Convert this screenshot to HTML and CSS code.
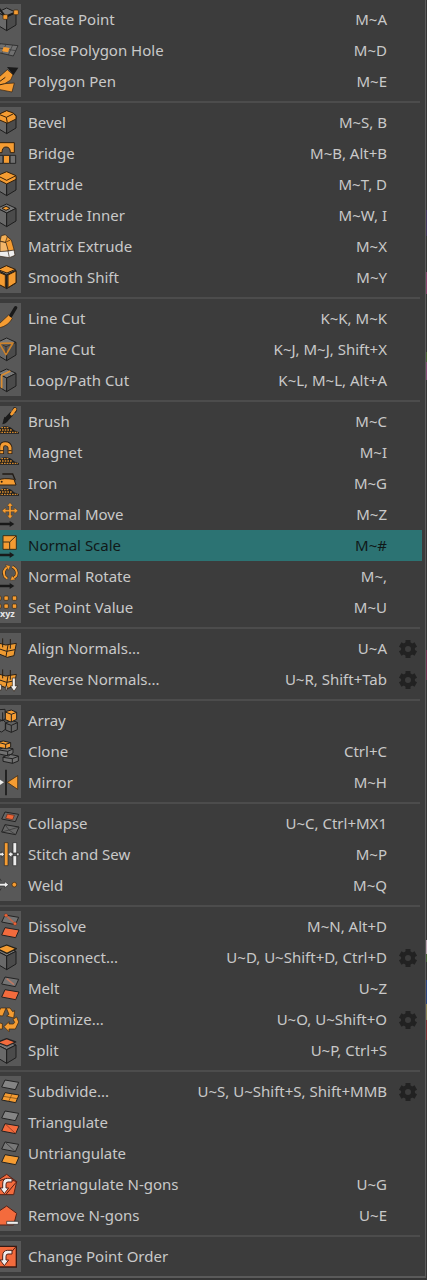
FILE: index.html
```html
<!DOCTYPE html>
<html lang="en">
<head>
<meta charset="utf-8">
<meta name="viewport" content="width=device-width, initial-scale=1">
<title>Mesh commands</title>
<link rel="stylesheet" href="styles.css">
</head>
<body>
<svg class="defs" aria-hidden="true">
  <symbol id="cube" viewBox="0 0 63 93"><g stroke="#1d1d1d" stroke-width="3" stroke-linejoin="round"><path fill="#777" d="M20 12 48 25 20 39-8 25z"/><path fill="#696969" d="M-8 25 20 39V80L-8 63z"/><path fill="#4b4b4b" d="M48 25 20 39V80L48 63z"/></g></symbol>
  <symbol id="mound" viewBox="0 0 63 93"><path fill="#1d1d1d" d="M-8 78Q2 58 18 61Q34 63 42 73L57 79V83H-8z"/><path stroke="#d58a2e" stroke-width="4" stroke-dasharray="5 3" fill="none" d="M-4 79H54M-2 72H38M4 65H27"/></symbol>
  <symbol id="axis" viewBox="0 0 63 93"><path fill="#191919" d="M-2 71H29V66L43 75 29 84V79H-2z"/></symbol>
  <symbol id="top" viewBox="0 0 63 93"><path d="M15 12 56 19 46 41 5 33z"/></symbol>
  <symbol id="low" viewBox="0 0 63 93"><path d="M15 50 57 57 47 80 5 72z"/></symbol>
  <symbol id="turn" viewBox="0 0 63 93"><path fill="#eee" stroke="#542116" stroke-width="3" d="M36 28V39H24Q18 39 18 46V57H26L13 74 0 57H8V45Q8 28 23 28z"/></symbol>
  <symbol id="plates" viewBox="0 0 63 93"><path fill="#ee9a31" stroke="#2a2016" stroke-width="3" stroke-linejoin="round" d="M-5 30 17 36 49 31 42 68 22 73-5 62z"/><path fill="none" stroke="#2a2016" stroke-width="3" d="M-4 47 20 55 45 50M24 36 18 70M8 16V43M31 18V47"/></symbol>
  <symbol id="gear" viewBox="0 0 20 20"><path fill="none" stroke="#222" stroke-width="5" d="M10 1V5M10 15V19M2.2 5.5 5.7 7.5M14.3 12.5 17.8 14.5M2.2 14.5 5.7 12.5M14.3 7.5 17.8 5.5"/><circle cx="10" cy="10" r="5" fill="none" stroke="#222" stroke-width="4"/></symbol>
</svg>

<main class="menu" aria-label="Mesh commands">
<ul class="group">
  <li class="row"><button class="item"><svg class="icon" viewBox="0 0 63 93"><use href="#cube"/><path fill="none" stroke="#1b1b1b" stroke-width="6" d="M-4 12 16 38 47 25"/><g fill="#f59c32" stroke="#38240d" stroke-width="2"><rect x="9" y="32" width="14" height="14" rx="3"/><rect x="41" y="18" width="14" height="14" rx="3"/></g></svg><span class="label">Create Point</span><kbd>M~A</kbd></button></li>
  <li class="row"><button class="item"><svg class="icon" viewBox="0 0 63 93"><path fill="#707070" stroke="#333" stroke-width="3" d="M0 26 54 32 40 63-8 52z"/><path fill="none" stroke="#333" stroke-width="2" d="M-4 39 47 47M18 28 5 55M38 30 25 60"/><path fill="#f59c32" d="M11 36 29 39 24 52 6 49z"/></svg><span class="label">Close Polygon Hole</span><kbd>M~D</kbd></button></li>
  <li class="row"><button class="item"><svg class="icon" viewBox="0 0 63 93"><path fill="#f59c32" stroke="#302010" stroke-width="2" stroke-linejoin="round" d="M22 11 39 26 32 42 14 53 43 51 36 78-5 70V35z"/><path fill="#191919" d="M21 3 55 5 40 28z"/><path stroke="#302010" stroke-width="3" d="M-3 48 16 34M-3 57 14 53"/></svg><span class="label">Polygon Pen</span><kbd>M~E</kbd></button></li>
</ul>
<hr>
<ul class="group">
  <li class="row"><button class="item"><svg class="icon" viewBox="0 0 63 93"><use href="#cube"/><g fill="#f59c32" stroke="#352009" stroke-width="3" stroke-linejoin="round"><path d="M20 11 40 18 48 28V36L22 49-8 36V24z"/><path fill="none" d="M-3 22 19 31 41 20M19 31 22 48"/></g></svg><span class="label">Bevel</span><kbd>M~S, B</kbd></button></li>
  <li class="row"><button class="item"><svg class="icon" viewBox="0 0 63 93"><path fill="#f59c32" stroke="#302010" stroke-width="3" d="M-5 14H43V44H31Q31 27 18 27Q6 27 6 44H-5z"/><g stroke="#252525" stroke-width="3"><path fill="#707070" d="M-8 52H9V76H-8zM30 52H47V76H30z"/><path fill="#f59c32" d="M10 52H29V76H10z"/></g></svg><span class="label">Bridge</span><kbd>M~B, Alt+B</kbd></button></li>
  <li class="row"><button class="item"><svg class="icon" viewBox="0 0 63 93"><use href="#cube"/><g fill="#f59c32" stroke="#352009" stroke-width="3" stroke-linejoin="round"><path d="M20 8 48 20V31L20 45-8 31V20z"/><path fill="none" d="M-8 20 20 34 48 20"/></g></svg><span class="label">Extrude</span><kbd>M~T, D</kbd></button></li>
  <li class="row"><button class="item"><svg class="icon" viewBox="0 0 63 93"><use href="#cube"/><path fill="#f59c32" stroke="#2b2114" stroke-width="3" d="M18 19 30 25 18 31 6 25z"/></svg><span class="label">Extrude Inner</span><kbd>M~W, I</kbd></button></li>
  <li class="row"><button class="item"><svg class="icon" viewBox="0 0 63 93"><g stroke="#302010" stroke-width="2" stroke-linejoin="round"><path fill="#f4b057" d="M4 14 16 11 25 20 18 35 0 30z"/><path fill="#f59c32" d="M22 17 34 27 43 59 24 60 16 34z"/><path fill="#f3b66a" d="M0 31 18 35 25 60 0 64z"/><path fill="#eee" d="M-5 62 24 60 42 57 45 73 28 80-5 75z"/><path fill="none" d="M24 60 28 79M16 34 31 27"/></g></svg><span class="label">Matrix Extrude</span><kbd>M~X</kbd></button></li>
  <li class="row"><button class="item"><svg class="icon" viewBox="0 0 63 93"><use href="#cube"/><g fill="#f59c32" stroke="#352009" stroke-width="3" stroke-linejoin="round"><path d="M19 11 46 22 21 33-6 23z"/><path d="M24 39 48 27V62L24 77z"/><path d="M-8 29 16 39V77L-8 65z"/></g></svg><span class="label">Smooth Shift</span><kbd>M~Y</kbd></button></li>
</ul>
<hr>
<ul class="group">
  <li class="row"><button class="item"><svg class="icon" viewBox="0 0 63 93"><path fill="#f59c32" stroke="#302010" stroke-width="2" d="M26 36 37 46Q25 69-4 75V64z"/><path stroke="#191919" stroke-width="10" stroke-linecap="round" d="M33 37 47 14"/></svg><span class="label">Line Cut</span><kbd>K~K, M~K</kbd></button></li>
  <li class="row"><button class="item"><svg class="icon" viewBox="0 0 63 93"><use href="#cube"/><path fill="#5a5a5a" stroke="#cc822a" stroke-width="5" stroke-linejoin="round" d="M-2 28 39 27 18 62z"/><path fill="none" stroke="#302010" stroke-width="2" d="M18 37V57M8 33 18 38 30 33"/></svg><span class="label">Plane Cut</span><kbd>K~J, M~J, Shift+X</kbd></button></li>
  <li class="row"><button class="item"><svg class="icon" viewBox="0 0 63 93"><use href="#cube"/><path fill="none" stroke="#dc8d30" stroke-width="5" stroke-linejoin="round" d="M31 18 5 31V70"/></svg><span class="label">Loop/Path Cut</span><kbd>K~L, M~L, Alt+A</kbd></button></li>
</ul>
<hr>
<ul class="group">
  <li class="row"><button class="item"><svg class="icon" viewBox="0 0 63 93"><use href="#mound"/><path stroke="#1b1b1b" stroke-width="13" stroke-linecap="round" d="M18 41 34 24M43 14 45 10"/><path stroke="#f59c32" stroke-width="9" stroke-linecap="round" d="M35 24 45 10"/><path fill="#1b1b1b" d="M13 32 24 42Q20 53 7 55z"/></svg><span class="label">Brush</span><kbd>M~C</kbd></button></li>
  <li class="row"><button class="item"><svg class="icon" viewBox="0 0 63 93"><use href="#mound"/><path fill="none" stroke="#302010" stroke-width="14" d="M5 51V31Q5 20 16 20T30 31V51"/><path fill="none" stroke="#f59c32" stroke-width="9" d="M5 49V31Q5 20 16 20T30 31V49"/><path stroke="#302010" stroke-width="3" d="M0 41H10M25 41H35"/></svg><span class="label">Magnet</span><kbd>M~I</kbd></button></li>
  <li class="row"><button class="item"><svg class="icon" viewBox="0 0 63 93"><use href="#mound"/><path fill="none" stroke="#201a14" stroke-width="4" d="M7 18H38L46 37"/><path fill="#f59c32" stroke="#302010" stroke-width="3" d="M-5 36Q10 29 42 34L48 51H-5z"/><circle cx="5" cy="41" r="3" fill="#302010"/></svg><span class="label">Iron</span><kbd>M~G</kbd></button></li>
  <li class="row"><button class="item"><svg class="icon" viewBox="0 0 63 93"><use href="#axis"/><path fill="#f59c32" stroke="#382510" stroke-width="1" d="M30 11 39 21H33V32H43V26L54 35 43 44V38H33V49H39L30 59 21 49H27V38H17V44L6 35 17 26V32H27V21H21z"/></svg><span class="label">Normal Move</span><kbd>M~Z</kbd></button></li>
  <li class="row selected"><button class="item"><svg class="icon" viewBox="0 0 63 93"><use href="#axis"/><path fill="#f59c32" stroke="#38301b" stroke-width="3" d="M9 17H49V58H9z"/><path fill="none" stroke="#38301b" stroke-width="3" d="M9 36H29V58M29 36 48 18"/></svg><span class="label">Normal Scale</span><kbd>M~#</kbd></button></li>
  <li class="row"><button class="item"><svg class="icon" viewBox="0 0 63 93"><use href="#axis"/><g fill="none"><path stroke="#302010" stroke-width="9" d="M24 17Q6 28 14 46L22 53M37 17Q55 27 49 44L38 54"/><path stroke="#f59c32" stroke-width="6" d="M24 17Q6 28 14 46L22 53M37 17Q55 27 49 44L38 54"/></g><path fill="#f59c32" stroke="#302010" stroke-width="1" d="M17 11 31 15 25 28zM31 58 36 44 46 56z"/></svg><span class="label">Normal Rotate</span><kbd>M~,</kbd></button></li>
  <li class="row"><button class="item"><svg class="icon" viewBox="0 0 63 93"><g fill="#f59c32" stroke="#30220f" stroke-width="2"><rect x="-9" y="12" width="12" height="13" rx="3"/><rect x="12" y="12" width="13" height="13" rx="3"/><rect x="37" y="12" width="13" height="13" rx="3"/><rect x="-9" y="36" width="12" height="13" rx="3"/><rect x="12" y="36" width="13" height="13" rx="3"/><rect x="37" y="36" width="13" height="13" rx="3"/></g><text class="axes" x="0" y="74">xyz</text></svg><span class="label">Set Point Value</span><kbd>M~U</kbd></button></li>
</ul>
<hr>
<ul class="group">
  <li class="row"><button class="item"><svg class="icon" viewBox="0 0 63 93"><use href="#plates"/></svg><span class="label">Align Normals...</span><kbd>U~A</kbd></button><button class="options" aria-label="Align Normals options"><svg viewBox="0 0 20 20"><use href="#gear"/></svg></button></li>
  <li class="row"><button class="item"><svg class="icon" viewBox="0 0 63 93"><use href="#plates"/><path fill="#eee" stroke="#302010" stroke-width="2" d="M37 42H46V66H53L42 82 31 66H37zM-3 62H4V78H-3zM17 66H21V78H17z"/></svg><span class="label">Reverse Normals...</span><kbd>U~R, Shift+Tab</kbd></button><button class="options" aria-label="Reverse Normals options"><svg viewBox="0 0 20 20"><use href="#gear"/></svg></button></li>
</ul>
<hr>
<ul class="group">
  <li class="row"><button class="item"><svg class="icon" viewBox="0 0 63 93"><g stroke="#202020" stroke-width="3" stroke-linejoin="round"><path fill="#626262" d="M-4 14 15 13 17 40 8 47-4 43zM-4 50 10 45 16 52V73L5 81-4 78zM17 54 35 46 52 52V74L34 82 17 75z"/><path fill="#f59c32" d="M16 20 34 15 50 22V43L33 51 16 44z"/><path fill="none" d="M16 21 34 28 50 22M34 28V51M17 55 34 61 52 53M34 61V82M8 22V46"/></g></svg><span class="label">Array</span></button></li>
  <li class="row"><button class="item"><svg class="icon" viewBox="0 0 63 93"><g stroke="#202020" stroke-width="3" stroke-linejoin="round"><path fill="#707070" d="M-2 40 13 34 39 38V51L25 60-2 54zM9 63 29 55 55 60V75L38 82 9 76z"/><path fill="#f59c32" d="M-5 18 10 15 32 20V33L19 38-5 34z"/><path fill="none" d="M-5 19 17 25 32 20M17 25V38M-2 42 23 46 39 39M23 46V58M9 64 37 68 55 61M37 68V82"/></g></svg><span class="label">Clone</span><kbd>Ctrl+C</kbd></button></li>
  <li class="row"><button class="item"><svg class="icon" viewBox="0 0 63 93"><path stroke="#191919" stroke-width="5" d="M18 8V85"/><path fill="#eee" stroke="#222" d="M-8 32 13 46-8 60z"/><path fill="#f59c32" stroke="#352009" stroke-width="2" d="M22 46 53 26V67z"/></svg><span class="label">Mirror</span><kbd>M~H</kbd></button></li>
</ul>
<hr>
<ul class="group">
  <li class="row"><button class="item"><svg class="icon" viewBox="0 0 63 93"><g fill="#666" stroke="#222" stroke-width="3"><use href="#top"/><use href="#low"/></g><path fill="#ee6537" stroke="#52271c" stroke-width="2" d="M22 18 43 22 38 35 17 31z"/><path fill="none" stroke="#303030" stroke-width="2" d="M15 50 27 66 57 57M5 72 27 66 47 80"/></svg><span class="label">Collapse</span><kbd>U~C, Ctrl+MX1</kbd></button></li>
  <li class="row"><button class="item"><svg class="icon" viewBox="0 0 63 93"><g stroke="#252525" stroke-width="2"><path fill="#f59c32" d="M13 11H24V80H13z"/><path fill="#eee" d="M39 11H50V80H39zM-5 42H5V37L13 46 5 55V50H-5zM57 42H35V36L24 46 35 56V50H57z"/></g></svg><span class="label">Stitch and Sew</span><kbd>M~P</kbd></button></li>
  <li class="row"><button class="item"><svg class="icon" viewBox="0 0 63 93"><path stroke="#242424" stroke-width="2" d="M-4 21 4 33M-4 67 4 55"/><path fill="#eee" stroke="#252525" stroke-width="2" d="M-5 40H14V34L26 44 14 54V48H-5z"/><circle cx="43" cy="44" r="7" fill="#f59c32" stroke="#352009" stroke-width="2"/></svg><span class="label">Weld</span><kbd>M~Q</kbd></button></li>
</ul>
<hr>
<ul class="group">
  <li class="row"><button class="item"><svg class="icon" viewBox="0 0 63 93"><g stroke="#222" stroke-width="3"><use href="#top" fill="#737373"/><use href="#low" fill="#f36b3d"/></g><path stroke="#bd664b" stroke-width="5" d="M18 13 45 38"/><g fill="#ee6537" stroke="#52271c"><circle cx="18" cy="13" r="5"/><circle cx="45" cy="38" r="5"/></g></svg><span class="label">Dissolve</span><kbd>M~N, Alt+D</kbd></button></li>
  <li class="row"><button class="item"><svg class="icon" viewBox="0 0 63 93"><use href="#cube" y="3"/><path fill="#f59c32" stroke="#242017" stroke-width="4" stroke-linejoin="round" d="M20 9 49 20 21 34-8 20z"/></svg><span class="label">Disconnect...</span><kbd>U~D, U~Shift+D, Ctrl+D</kbd></button><button class="options" aria-label="Disconnect options"><svg viewBox="0 0 20 20"><use href="#gear"/></svg></button></li>
  <li class="row"><button class="item"><svg class="icon" viewBox="0 0 63 93"><g stroke="#222" stroke-width="3"><use href="#top" fill="#737373"/><use href="#low" fill="#f36b3d"/></g><path stroke="#bd7964" stroke-width="5" d="M20 17 42 35"/></svg><span class="label">Melt</span><kbd>U~Z</kbd></button></li>
  <li class="row"><button class="item"><svg class="icon" viewBox="0 0 63 93"><g fill="#f59c32" stroke="#352009" stroke-width="2" stroke-linejoin="round"><path d="M-8 34 2 12H18L8 36z"/><path d="M19 12H30L38 23 44 20 41 42 20 36 27 31z"/><path d="M39 46 50 39 56 54 46 75H27V83L12 68 27 53V60H40L44 55z"/><path d="M-8 55 7 59V75H-8z"/></g></svg><span class="label">Optimize...</span><kbd>U~O, U~Shift+O</kbd></button><button class="options" aria-label="Optimize options"><svg viewBox="0 0 20 20"><use href="#gear"/></svg></button></li>
  <li class="row"><button class="item"><svg class="icon" viewBox="0 0 63 93"><use href="#cube" y="5"/><path fill="#f36b3d" stroke="#222" stroke-width="4" stroke-linejoin="round" d="M20 11 47 21 21 33-8 22z"/></svg><span class="label">Split</span><kbd>U~P, Ctrl+S</kbd></button></li>
</ul>
<hr>
<ul class="group">
  <li class="row"><button class="item"><svg class="icon" viewBox="0 0 63 93"><g stroke="#222" stroke-width="3"><use href="#top" fill="#858585"/><use href="#low" fill="#f59c32"/><path stroke="#6b4212" stroke-width="2" d="M36 54 26 76M10 61 52 68"/></g></svg><span class="label">Subdivide...</span><kbd>U~S, U~Shift+S, Shift+MMB</kbd></button><button class="options" aria-label="Subdivide options"><svg viewBox="0 0 20 20"><use href="#gear"/></svg></button></li>
  <li class="row"><button class="item"><svg class="icon" viewBox="0 0 63 93"><g stroke="#222" stroke-width="3"><use href="#top" fill="#858585"/><use href="#low" fill="#f36b3d"/><path stroke="#7a2c17" stroke-width="2" d="M16 51 46 79"/></g></svg><span class="label">Triangulate</span></button></li>
  <li class="row"><button class="item"><svg class="icon" viewBox="0 0 63 93"><g stroke="#222" stroke-width="3"><use href="#top" fill="#777"/><use href="#low" fill="#f59c32"/><path stroke="#444" d="M16 13 45 40"/></g></svg><span class="label">Untriangulate</span></button></li>
  <li class="row"><button class="item"><svg class="icon" viewBox="0 0 63 93"><path fill="#f36b3d" stroke="#542116" stroke-width="3" stroke-linejoin="round" d="M20 16 50 38 41 77H-3L-10 36z"/><path fill="none" stroke="#542116" stroke-width="3" d="M-8 37 20 28 50 38 18 76"/><use href="#turn"/></svg><span class="label">Retriangulate N-gons</span><kbd>U~G</kbd></button></li>
  <li class="row"><button class="item"><svg class="icon" viewBox="0 0 63 93"><path fill="#f36b3d" stroke="#542116" stroke-width="3" stroke-linejoin="round" d="M20 18 50 40 41 75H-3L-10 38z"/><path fill="#eee" stroke="#222" stroke-width="2" d="M20 64H55V73H20z"/></svg><span class="label">Remove N-gons</span><kbd>U~E</kbd></button></li>
</ul>
<hr>
<ul class="group">
  <li class="row"><button class="item"><svg class="icon" viewBox="0 0 63 93"><path fill="#f36b3d" stroke="#371a13" stroke-width="4" d="M-5 16H49V78H-5z"/><path stroke="#542116" stroke-width="3" d="M48 17 36 31"/><use href="#turn"/></svg><span class="label">Change Point Order</span></button></li>
</ul>
</main>
</body>
</html>
```
FILE: styles.css
```css
* {
  box-sizing: border-box;
}

body {
  margin: 0;
  padding-right: 1px;
  background: linear-gradient(#353535 0 210px, #42385a 210px 236px, #353535 236px 272px, #854269 272px 294px, #353535 294px 352px, #496333 352px 362px, #804a72 362px 380px, #353535 380px 650px, #6b304d 650px 680px, #353535 680px 940px, #b9a4b0 940px 954px, #456034 954px 962px, #353535 962px 980px, #29447d 980px 1004px, #8b8050 1004px 1020px, #783030 1020px 1040px, #353535 1040px);
  color: #c9c9c9;
  font-family: "Noto Sans", "Open Sans", sans-serif;
  font-size: 15px;
}

.defs {
  position: absolute;
  width: 0;
  height: 0;
}

.menu {
  padding: 4px 3px 4px 0;
  border-right: 1px solid #5a5a5a;
  border-bottom: 2px solid #5a5a5a;
  background: #3c3c3c;
}

.group {
  margin: 0;
  padding: 0;
  list-style: none;
}

.row {
  display: flex;
  height: 31px;
}

.item {
  display: flex;
  flex: 1;
  align-items: center;
  min-width: 0;
  padding: 0 35px 0 0;
  border: 0;
  background: none;
  color: inherit;
  font: inherit;
  text-align: left;
  white-space: nowrap;
}

.item:not(:last-child) {
  padding-right: 7px;
}

.icon {
  flex: none;
  width: 21px;
  height: 31px;
  margin-right: 7px;
  overflow: hidden;
  background: #585858;
}

.label,
kbd {
  padding-bottom: 2px;
  font: inherit;
}

.label {
  flex: 1;
}

.axes {
  fill: #e6e6e6;
  font: bold 27px "Noto Sans", sans-serif;
}

.options {
  display: grid;
  place-items: center;
  width: 28px;
  padding: 0;
  border: 0;
  background: none;
}

.options svg {
  width: 20px;
  height: 20px;
}

.selected {
  background: #2c7373;
  color: #101919;
}

.selected .icon {
  background: none;
}

hr {
  height: 2px;
  margin: 4px 2px 4px 0;
  border: 0;
  background: #4c4c4c;
}
```
